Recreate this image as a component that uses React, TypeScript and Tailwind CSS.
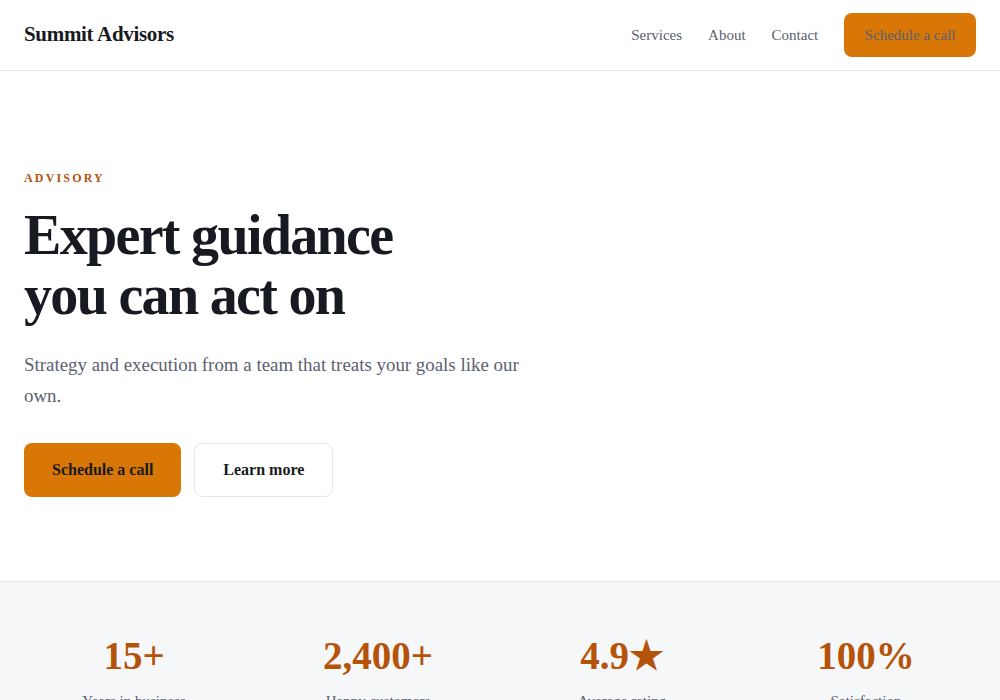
const serif = { fontFamily: '"Liberation Serif", "Times New Roman", serif' };

const stats = [
  { value: "15+", label: "Years in business" },
  { value: "2,400+", label: "Happy customers" },
  { value: "4.9★", label: "Average rating" },
  { value: "100%", label: "Satisfaction" },
];

export default function App() {
  return (
    <div className="min-h-screen bg-white text-[#171a21]" style={serif}>
      <header className="flex h-[71px] items-center justify-between border-b border-[#e5e7eb] px-6">
        <a className="text-[21px] font-bold tracking-[-0.015em] text-[#171a21]">Summit Advisors</a>
        <nav className="flex items-center gap-[26px] text-[15px] text-[#5b6170]">
          <a>Services</a>
          <a>About</a>
          <a>Contact</a>
          <a className="flex h-11 items-center rounded-lg bg-[#d97706] px-[20.5px] text-[#5b6170]">
            Schedule a call
          </a>
        </nav>
      </header>

      <section className="px-6 pb-[84px] pt-[98px]">
        <p className="text-[12px] font-bold uppercase tracking-[0.18em] text-[#b45309]">Advisory</p>
        <h1 className="mt-[18px] text-[56px] font-bold leading-[60px] tracking-[-0.03em] text-[#171a21]">
          Expert guidance
          <br />
          you can act on
        </h1>
        <p className="mt-[24px] max-w-[530px] text-[18.9px] leading-[31px] text-[#5b6170]">
          Strategy and execution from a team that treats your goals like our own.
        </p>
        <div className="mt-[32px] flex gap-[13px]">
          <button className="h-[54px] rounded-lg bg-[#d97706] px-7 text-[16px] font-bold text-[#171a21]">
            Schedule a call
          </button>
          <button className="h-[54px] rounded-lg border border-[#e5e7eb] bg-white px-7 text-[16px] font-bold text-[#171a21]">
            Learn more
          </button>
        </div>
      </section>

      <section className="border-t border-[#e5e7eb] bg-[#f6f7f9] px-6 pb-16 pt-[50px]">
        <div className="grid grid-cols-4 gap-6">
          {stats.map((s) => (
            <div key={s.label} className="flex flex-col items-center text-center">
              <div className="text-[39px] font-bold leading-[48px] text-[#b45309]">{s.value}</div>
              <div className="mt-[10px] text-[15px] text-[#5b6170]">{s.label}</div>
            </div>
          ))}
        </div>
      </section>
    </div>
  );
}
